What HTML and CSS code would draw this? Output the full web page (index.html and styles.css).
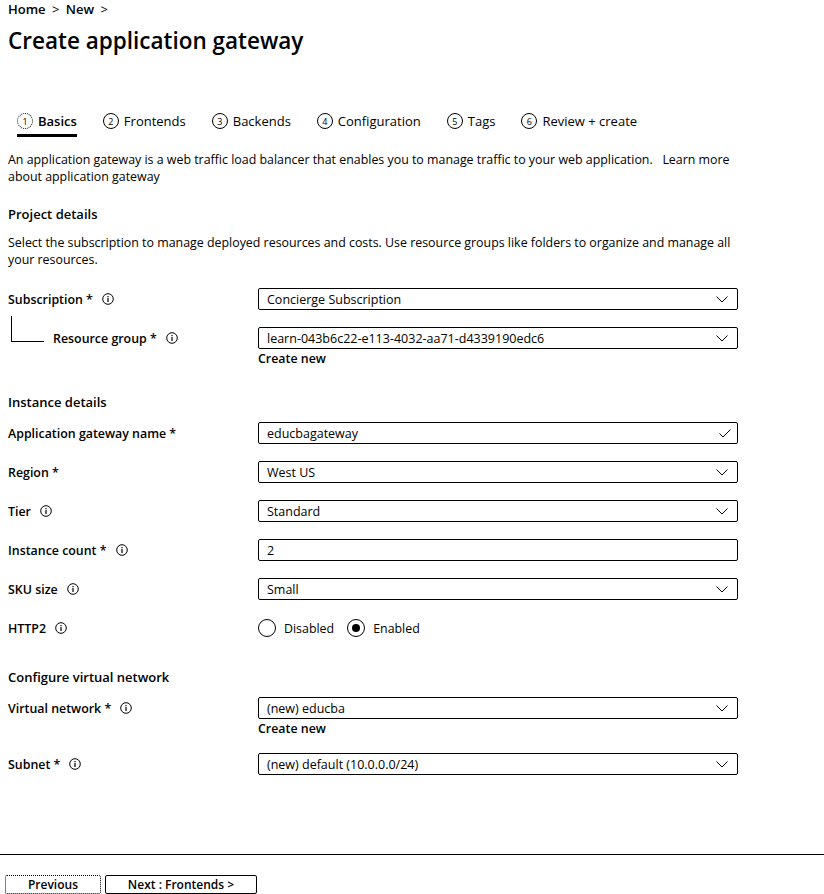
FILE: index.html
```html
<!DOCTYPE html>
<html>
<head>
<meta charset="utf-8">
<link rel="stylesheet" href="styles.css">
</head>
<body>
<div class="page">
  <div class="crumbs">Home <span class="sep">&gt;</span> New <span class="sep">&gt;</span></div>
  <h1 class="title">Create application gateway</h1>

  <div class="tabs">
    <div class="tab active"><span class="num dotted">1</span><span class="tab-label">Basics</span></div>
    <div class="tab"><span class="num">2</span><span class="tab-label">Frontends</span></div>
    <div class="tab"><span class="num">3</span><span class="tab-label">Backends</span></div>
    <div class="tab"><span class="num">4</span><span class="tab-label">Configuration</span></div>
    <div class="tab"><span class="num">5</span><span class="tab-label">Tags</span></div>
    <div class="tab"><span class="num">6</span><span class="tab-label">Review + create</span></div>
  </div>

  <p class="desc intro">An application gateway is a web traffic load balancer that enables you to manage traffic to your web application.&nbsp;&nbsp; Learn more about application gateway</p>

  <h2 class="section">Project details</h2>
  <p class="desc">Select the subscription to manage deployed resources and costs. Use resource groups like folders to organize and manage all your resources.</p>

  <div class="row r-sub">
    <div class="label">Subscription *<span class="info"><svg viewBox="0 0 12 12" width="12" height="12"><circle cx="6" cy="6" r="5.3" fill="none" stroke="#000" stroke-width="1"/><rect x="5.4" y="5" width="1.2" height="4" fill="#000"/><rect x="5.4" y="3" width="1.2" height="1.2" fill="#000"/></svg></span></div>
    <div class="field select"><span>Concierge Subscription</span><svg class="chev" viewBox="0 0 12 7" width="12" height="7"><path d="M0.5 0.5 L6 6 L11.5 0.5" fill="none" stroke="#000" stroke-width="1"/></svg></div>
  </div>

  <div class="row r-rg">
    <div class="label tree">Resource group *<span class="info"><svg viewBox="0 0 12 12" width="12" height="12"><circle cx="6" cy="6" r="5.3" fill="none" stroke="#000" stroke-width="1"/><rect x="5.4" y="5" width="1.2" height="4" fill="#000"/><rect x="5.4" y="3" width="1.2" height="1.2" fill="#000"/></svg></span></div>
    <div class="fieldwrap">
      <div class="field select"><span>learn-043b6c22-e113-4032-aa71-d4339190edc6</span><svg class="chev" viewBox="0 0 12 7" width="12" height="7"><path d="M0.5 0.5 L6 6 L11.5 0.5" fill="none" stroke="#000" stroke-width="1"/></svg></div>
      <div class="create">Create new</div>
    </div>
  </div>

  <h2 class="section s-inst">Instance details</h2>

  <div class="row">
    <div class="label">Application gateway name *</div>
    <div class="field select"><span>educbagateway</span><svg class="check" viewBox="0 0 12 9" width="12" height="9"><path d="M0.5 4.5 L4 8 L11.5 0.5" fill="none" stroke="#000" stroke-width="1"/></svg></div>
  </div>
  <div class="row">
    <div class="label">Region *</div>
    <div class="field select"><span>West US</span><svg class="chev" viewBox="0 0 12 7" width="12" height="7"><path d="M0.5 0.5 L6 6 L11.5 0.5" fill="none" stroke="#000" stroke-width="1"/></svg></div>
  </div>
  <div class="row">
    <div class="label">Tier<span class="info"><svg viewBox="0 0 12 12" width="12" height="12"><circle cx="6" cy="6" r="5.3" fill="none" stroke="#000" stroke-width="1"/><rect x="5.4" y="5" width="1.2" height="4" fill="#000"/><rect x="5.4" y="3" width="1.2" height="1.2" fill="#000"/></svg></span></div>
    <div class="field select"><span>Standard</span><svg class="chev" viewBox="0 0 12 7" width="12" height="7"><path d="M0.5 0.5 L6 6 L11.5 0.5" fill="none" stroke="#000" stroke-width="1"/></svg></div>
  </div>
  <div class="row">
    <div class="label">Instance count *<span class="info"><svg viewBox="0 0 12 12" width="12" height="12"><circle cx="6" cy="6" r="5.3" fill="none" stroke="#000" stroke-width="1"/><rect x="5.4" y="5" width="1.2" height="4" fill="#000"/><rect x="5.4" y="3" width="1.2" height="1.2" fill="#000"/></svg></span></div>
    <div class="field"><span>2</span></div>
  </div>
  <div class="row">
    <div class="label">SKU size<span class="info"><svg viewBox="0 0 12 12" width="12" height="12"><circle cx="6" cy="6" r="5.3" fill="none" stroke="#000" stroke-width="1"/><rect x="5.4" y="5" width="1.2" height="4" fill="#000"/><rect x="5.4" y="3" width="1.2" height="1.2" fill="#000"/></svg></span></div>
    <div class="field select"><span>Small</span><svg class="chev" viewBox="0 0 12 7" width="12" height="7"><path d="M0.5 0.5 L6 6 L11.5 0.5" fill="none" stroke="#000" stroke-width="1"/></svg></div>
  </div>
  <div class="row r-http">
    <div class="label">HTTP2<span class="info"><svg viewBox="0 0 12 12" width="12" height="12"><circle cx="6" cy="6" r="5.3" fill="none" stroke="#000" stroke-width="1"/><rect x="5.4" y="5" width="1.2" height="4" fill="#000"/><rect x="5.4" y="3" width="1.2" height="1.2" fill="#000"/></svg></span></div>
    <div class="radios">
      <span class="radio"><span class="dot"></span>Disabled</span>
      <span class="radio on"><span class="dot"></span>Enabled</span>
    </div>
  </div>

  <h2 class="section s-vnet">Configure virtual network</h2>

  <div class="row r-vnet">
    <div class="label">Virtual network *<span class="info"><svg viewBox="0 0 12 12" width="12" height="12"><circle cx="6" cy="6" r="5.3" fill="none" stroke="#000" stroke-width="1"/><rect x="5.4" y="5" width="1.2" height="4" fill="#000"/><rect x="5.4" y="3" width="1.2" height="1.2" fill="#000"/></svg></span></div>
    <div class="fieldwrap">
      <div class="field select"><span>(new) educba</span><svg class="chev" viewBox="0 0 12 7" width="12" height="7"><path d="M0.5 0.5 L6 6 L11.5 0.5" fill="none" stroke="#000" stroke-width="1"/></svg></div>
      <div class="create">Create new</div>
    </div>
  </div>
  <div class="row r-subnet">
    <div class="label">Subnet *<span class="info"><svg viewBox="0 0 12 12" width="12" height="12"><circle cx="6" cy="6" r="5.3" fill="none" stroke="#000" stroke-width="1"/><rect x="5.4" y="5" width="1.2" height="4" fill="#000"/><rect x="5.4" y="3" width="1.2" height="1.2" fill="#000"/></svg></span></div>
    <div class="field select"><span>(new) default (10.0.0.0/24)</span><svg class="chev" viewBox="0 0 12 7" width="12" height="7"><path d="M0.5 0.5 L6 6 L11.5 0.5" fill="none" stroke="#000" stroke-width="1"/></svg></div>
  </div>
</div>

<div class="footer">
  <button class="btn prev">Previous</button>
  <button class="btn next">Next : Frontends &gt;</button>
</div>
</body>
</html>
```

FILE: styles.css
```css
html, body {
  margin: 0;
  padding: 0;
  background: #fff;
  color: #000;
}
body {
  font-family: "Open Sans", "Noto Sans", sans-serif;
  font-size: 12.4px;
  width: 824px;
  height: 894px;
  overflow: hidden;
}
.page {
  padding: 0 8px;
  height: 854px;
  box-sizing: border-box;
}
.crumbs {
  font-size: 13px;
  line-height: 18px;
  font-weight: 600;
}
.crumbs .sep {
  margin: 0 3px;
  font-weight: 400;
}
.title {
  margin: 9px 0 0 0;
  font-size: 22.5px;
  line-height: 28px;
  font-weight: 600;
  letter-spacing: 0;
}
.tabs {
  display: flex;
  gap: 26px;
  margin-top: 53px;
  padding-left: 9px;
  height: 30px;
}
.tab {
  display: flex;
  align-items: center;
  gap: 5px;
  height: 26px;
  font-size: 13px;
  border-bottom: 3px solid transparent;
  align-self: flex-start;
}
.tab.active {
  border-bottom-color: #000;
  font-weight: 600;
}
.num {
  display: inline-flex;
  align-items: center;
  justify-content: center;
  width: 14px;
  height: 14px;
  border: 1px solid #000;
  border-radius: 50%;
  font-size: 9px;
  line-height: 1;
  font-weight: 400;
}
.num.dotted {
  border-style: dotted;
}
.desc {
  margin: 0;
  line-height: 17px;
  font-size: 12.4px;
  max-width: 742px;
}
.intro {
  margin-top: 13px;
}
.section {
  font-size: 13px;
  font-weight: 600;
  margin: 20px 0 11px 0;
  line-height: 18px;
}
.row {
  display: grid;
  grid-template-columns: 250px 480px;
  align-items: start;
  margin-bottom: 17px;
}
.r-sub {
  margin-top: 20px;
}
.label {
  display: flex;
  align-items: center;
  height: 22px;
  font-weight: 600;
  font-size: 12.4px;
}
.info {
  display: inline-flex;
  margin-left: 9px;
}
.tree {
  position: relative;
  padding-left: 45px;
}
.tree::before {
  content: "";
  position: absolute;
  left: 3px;
  top: -11px;
  width: 32px;
  height: 25px;
  border-left: 1px solid #000;
  border-bottom: 1px solid #000;
}
.field {
  height: 22px;
  box-sizing: border-box;
  border: 1px solid #000;
  border-radius: 2px;
  display: flex;
  align-items: center;
  justify-content: space-between;
  padding: 0 8px 0 8px;
  font-size: 12.5px;
}
.chev {
  margin-right: 1px;
}
.check {
  margin-right: -2px;
}
.create {
  font-weight: 600;
  line-height: 20px;
}
.r-rg {
  margin-bottom: 0;
}
.s-inst {
  margin-top: 24px;
  margin-bottom: 11px;
}
.r-http {
  margin-top: 1px;
}
.radios {
  display: flex;
  align-items: center;
  height: 22px;
  gap: 13px;
}
.radio {
  display: inline-flex;
  align-items: center;
  gap: 8px;
}
.radio .dot {
  width: 18px;
  height: 18px;
  box-sizing: border-box;
  border: 1px solid #000;
  border-radius: 50%;
  display: inline-flex;
  align-items: center;
  justify-content: center;
}
.radio.on .dot::after {
  content: "";
  width: 8px;
  height: 8px;
  border-radius: 50%;
  background: #000;
}
.s-vnet {
  margin-top: 29px;
  margin-bottom: 11px;
}
.r-vnet {
  margin-bottom: 14px;
}
.footer {
  border-top: 1px solid #000;
  padding: 20px 0 0 5px;
  display: flex;
  gap: 4px;
}
.btn {
  font-family: "Open Sans", "Noto Sans", sans-serif;
  font-size: 12px;
  font-weight: 600;
  color: #000;
  background: #fff;
  height: 19px;
  line-height: 17px;
  border-radius: 2px;
  padding: 0;
}
.prev {
  width: 96px;
  border: 1px dotted #000;
}
.next {
  width: 152px;
  border: 1px solid #000;
}
```
